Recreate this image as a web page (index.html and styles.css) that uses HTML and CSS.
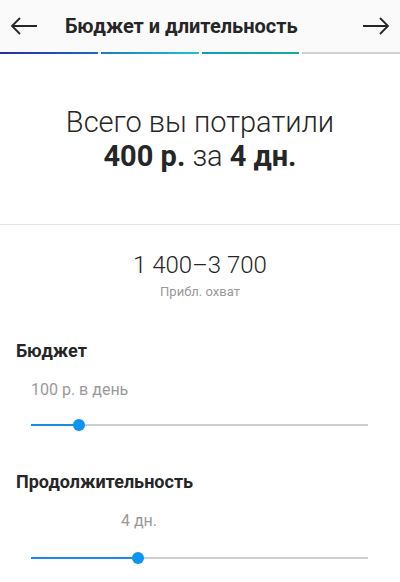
FILE: index.html
```html
<!DOCTYPE html>
<html lang="ru">
<head>
    <meta charset="UTF-8">
    <meta name="viewport" content="width=device-width, initial-scale=1.0">
    <title>Бюджет и длительность</title>
    <link rel="stylesheet" href="styles.css">
</head>
<body>
    <div class="topbar">
        <svg class="arrow" width="28" height="18" viewBox="0 0 28 18">
            <path d="M27 9H2M10 1L2 9l8 8" fill="none" stroke="#262626" stroke-width="1.8"/>
        </svg>
        <h1 class="title">Бюджет и длительность</h1>
        <svg class="arrow arrow-right" width="28" height="18" viewBox="0 0 28 18">
            <path d="M1 9h25M18 1l8 8-8 8" fill="none" stroke="#262626" stroke-width="1.8"/>
        </svg>
    </div>
    <div class="steps">
        <div class="step step1"></div>
        <div class="step step2"></div>
        <div class="step step3"></div>
        <div class="step"></div>
    </div>

    <div class="summary">
        <div>Всего вы потратили</div>
        <div><b>400 р.</b> за <b>4 дн.</b></div>
    </div>

    <div class="reach">
        <div class="reach-num">1 400–3 700</div>
        <div class="reach-label">Прибл. охват</div>
    </div>

    <div class="field">
        <h2>Бюджет</h2>
        <div class="value">100 р. в день</div>
        <div class="slider">
            <div class="track"><div class="fill" style="width: 14.2%"></div></div>
            <div class="thumb" style="left: 14.2%"></div>
        </div>
    </div>

    <div class="field">
        <h2>Продолжительность</h2>
        <div class="value value-center">4 дн.</div>
        <div class="slider">
            <div class="track"><div class="fill" style="width: 31.8%"></div></div>
            <div class="thumb" style="left: 31.8%"></div>
        </div>
    </div>
</body>
</html>
```

FILE: styles.css
```css
body {
    margin: 0;
    font-family: Roboto, "Liberation Sans", sans-serif;
    color: #262626;
    background: #fff;
}
.topbar {
    display: flex;
    align-items: center;
    height: 52px;
    padding: 0 10px;
    background: #fafafa;
}
.arrow {
    display: block;
}
.arrow-right {
    margin-left: auto;
}
.title {
    margin: 0 0 0 27px;
    font-size: 20px;
    font-weight: 700;
}
.steps {
    display: flex;
    gap: 3px;
    height: 2px;
    background: #fafafa;
}
.step {
    flex: 1;
    background: #d0d0d0;
}
.step1 {
    background: linear-gradient(to right, #2b2a9c, #1c6cbf);
}
.step2 {
    background: linear-gradient(to right, #1a7cc4, #22bfdc);
}
.step3 {
    background: linear-gradient(to right, #0f9cbc, #12ad9f);
}
.summary {
    padding: 51px 0 51px;
    border-bottom: 1px solid #e4e4e4;
    text-align: center;
    font-size: 29px;
    font-weight: 300;
    line-height: 34px;
}
.summary b {
    font-weight: 700;
}
.reach {
    margin-top: 25px;
    text-align: center;
}
.reach-num {
    font-size: 24px;
    font-weight: 300;
    line-height: 30px;
}
.reach-label {
    margin-top: 4px;
    font-size: 13px;
    line-height: 16px;
    color: #999;
}
.field {
    padding: 0 16px;
}
.field h2 {
    margin: 40px 0 0;
    font-size: 18px;
    line-height: 21px;
    font-weight: 700;
}
.field + .field h2 {
    margin-top: 36px;
}
.value {
    margin-top: 19px;
    padding-left: 15px;
    font-size: 16px;
    line-height: 19px;
    color: #999;
}
.value-center {
    padding-left: 105px;
}
.slider {
    position: relative;
    height: 20px;
    margin: 16px 16px 0 15px;
}
.field + .field .slider {
    margin-top: 18px;
}
.track {
    position: absolute;
    left: 0;
    right: 0;
    top: 9px;
    height: 2px;
    background: #cfcfcf;
}
.fill {
    height: 100%;
    background: #1b8ddf;
}
.thumb {
    position: absolute;
    top: 4px;
    width: 12px;
    height: 12px;
    margin-left: -6px;
    border-radius: 50%;
    background: #0a95f0;
}
```
